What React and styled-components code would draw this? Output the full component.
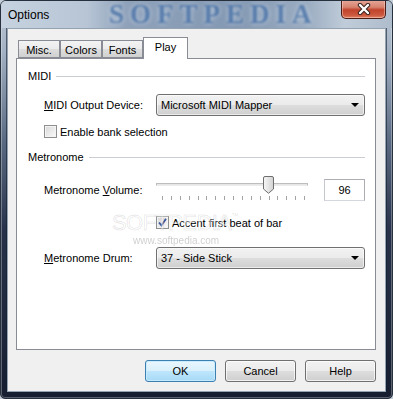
import React from 'react'
import styled, { createGlobalStyle } from 'styled-components'

const GlobalStyle = createGlobalStyle`
  html, body {
    margin: 0;
    padding: 0;
    background: #c3ced9;
  }
  body {
    font-family: "Liberation Sans", Arial, sans-serif;
  }
`

const Window = styled.div`
  position: relative;
  width: 393px;
  height: 399px;
  box-sizing: border-box;
  display: flex;
  flex-direction: column;
  overflow: hidden;
  border: 1px solid #27303d;
  border-radius: 6px 6px 5px 5px;
  background: linear-gradient(180deg, #bcc8d6 0px, #a3b2c4 50px, #5a6a82 140px, #27324a 230px, #161e30 399px);
  box-shadow: inset 0 0 0 1px rgba(255, 255, 255, 0.3);
`

const TitleBar = styled.div`
  position: relative;
  height: 27px;
  flex: none;
  display: flex;
  align-items: center;
  padding-left: 7px;
  background: linear-gradient(90deg, #c6d2df 0%, #b7c5d5 22%, #8fa2ba 32%, #8398b2 60%, #9aacc1 78%, #c0ccd9 88%, #aebccc 100%);
`

const Title = styled.span`
  position: relative;
  z-index: 1;
  font-size: 12px;
  color: #000;
`

const TitleMark = styled.span`
  position: absolute;
  left: 108px;
  top: -2px;
  font-family: "Liberation Serif", serif;
  font-weight: bold;
  font-size: 27px;
  letter-spacing: 6px;
  color: rgba(62, 104, 160, 0.75);
  text-shadow: 0 0 5px rgba(225, 235, 248, 0.7);
  filter: blur(0.8px);
`

const CloseButton = styled.div`
  position: absolute;
  top: -1px;
  right: 6px;
  width: 45px;
  height: 19px;
  box-sizing: border-box;
  display: flex;
  align-items: center;
  justify-content: center;
  border: 1px solid #4a1d16;
  border-top: none;
  border-radius: 0 0 5px 5px;
  background: linear-gradient(180deg, #e7a899 0%, #d7826f 40%, #c1432b 55%, #cc5a3e 85%, #e3866a 100%);
  box-shadow: inset 0 0 0 1px rgba(255, 220, 210, 0.45);
`

const Body = styled.div`
  flex: 1;
  display: flex;
  padding: 0 6px 6px 6px;
`

const Client = styled.div`
  flex: 1;
  display: flex;
  flex-direction: column;
  padding: 8px 9px 9px 8px;
  border: 1px solid #95a2b2;
  background: #f0f0f0;
  box-shadow: 0 0 0 1px rgba(20, 30, 45, 0.6);
`

const TabStrip = styled.div`
  display: flex;
  align-items: flex-end;
  height: 21px;
  padding-left: 2px;
`

const Tab = styled.div`
  position: relative;
  z-index: ${p => (p.$active ? 2 : 1)};
  width: ${p => p.$w}px;
  height: ${p => (p.$active ? 22 : 18)}px;
  margin-bottom: ${p => (p.$active ? -1 : 0)}px;
  box-sizing: border-box;
  display: flex;
  justify-content: center;
  align-items: ${p => (p.$active ? 'flex-start' : 'center')};
  padding-top: ${p => (p.$active ? 3 : 1)}px;
  border: 1px solid #898c95;
  border-bottom: ${p => (p.$active ? 'none' : '1px solid #898c95')};
  background: ${p => (p.$active ? '#fff' : 'linear-gradient(180deg, #f3f3f3 0%, #ebebeb 50%, #dedede 51%, #d0d0d0 100%)')};
  font-size: 11px;
  color: #000;
`

const Panel = styled.div`
  position: relative;
  height: 292px;
  box-sizing: border-box;
  display: flex;
  flex-direction: column;
  padding: 11px 10px 0 11px;
  border: 1px solid #898c95;
  background: #fff;
  font-size: 11px;
  color: #000;
`

const GroupHeader = styled.div`
  display: flex;
  align-items: center;
  gap: 5px;
  height: 13px;
  line-height: 13px;
  margin-top: ${p => p.$mt || 0}px;

  &::after {
    content: '';
    flex: 1;
    height: 1px;
    background: #c9cdd2;
  }
`

const Row = styled.div`
  display: flex;
  align-items: center;
  height: ${p => p.$h || 22}px;
  margin-top: ${p => p.$mt || 0}px;
  margin-left: ${p => p.$indent || 16}px;
`

const Label = styled.span`
  width: 112px;
  flex: none;
  white-space: nowrap;
`

const Select = styled.div`
  flex: 1;
  height: 22px;
  box-sizing: border-box;
  display: flex;
  align-items: center;
  justify-content: space-between;
  padding: 0 5px 1px 4px;
  border: 1px solid #707070;
  border-radius: 3px;
  background: linear-gradient(180deg, #f2f2f2 0%, #ebebeb 50%, #dddddd 51%, #cfcfcf 100%);
  box-shadow: inset 0 0 0 1px rgba(255, 255, 255, 0.6);
`

const Arrow = styled.span`
  width: 0;
  height: 0;
  border-left: 4px solid transparent;
  border-right: 4px solid transparent;
  border-top: 4px solid #000;
  margin-top: 1px;
`

const CheckLabel = styled.label`
  display: flex;
  align-items: center;
  gap: 3px;
  height: 13px;
`

const Box = styled.span`
  width: 13px;
  height: 13px;
  box-sizing: border-box;
  flex: none;
  display: flex;
  align-items: center;
  justify-content: center;
  border: 1px solid #8e8f8f;
  background: linear-gradient(135deg, #d6d6d6 0%, #e8e8e8 45%, #fafafa 100%);
  box-shadow: inset 0 0 0 1px #f4f4f4;
`

const Slider = styled.div`
  position: relative;
  width: 152px;
  height: 22px;
  flex: none;
  display: flex;
  flex-direction: column;
`

const Track = styled.div`
  height: 3px;
  margin-top: 4px;
  box-sizing: border-box;
  border: 1px solid #bdbdbd;
  border-bottom-color: #ececec;
  background: #e6e8e8;
`

const Ticks = styled.div`
  display: flex;
  justify-content: space-between;
  height: 4px;
  margin: 10px 3px 0 6px;
`

const Tick = styled.span`
  width: 1px;
  height: 4px;
  background: #a3a3a3;
`

const Thumb = styled.svg`
  position: absolute;
  left: 107px;
  top: -3px;
`

const Edit = styled.div`
  width: 41px;
  height: 22px;
  box-sizing: border-box;
  margin-left: auto;
  border: 1px solid #abadb3;
  border-left-color: #c5c8cf;
  border-bottom-color: #d4d7dd;
  background: #fff;
  text-align: center;
  line-height: 20px;
`

const Watermark = styled.span`
  position: absolute;
  left: 95px;
  top: 151px;
  font-size: 22px;
  letter-spacing: -0.6px;
  color: rgba(255, 255, 255, 0.5);
  -webkit-text-stroke: 1px rgba(0, 0, 0, 0.1);
  pointer-events: none;

  sup {
    font-size: 7px;
    vertical-align: 12px;
    -webkit-text-stroke: 0;
    color: rgba(0, 0, 0, 0.15);
  }
`

const WatermarkUrl = styled.span`
  position: absolute;
  left: 116px;
  top: 176px;
  font-size: 10px;
  color: rgba(0, 0, 0, 0.2);
  filter: blur(0.3px);
  pointer-events: none;
`

const ButtonRow = styled.div`
  display: flex;
  justify-content: flex-end;
  gap: 9px;
  margin-top: 10px;
`

const Button = styled.div`
  width: 71px;
  height: 22px;
  box-sizing: border-box;
  display: flex;
  align-items: center;
  justify-content: center;
  border: 1px solid ${p => (p.$primary ? '#3c7fb1' : '#707070')};
  border-radius: 3px;
  background: ${p =>
    p.$primary
      ? 'linear-gradient(180deg, #eaf6fd 0%, #d9f0fc 50%, #bee6fd 51%, #a7d9f5 100%)'
      : 'linear-gradient(180deg, #f2f2f2 0%, #ebebeb 50%, #dddddd 51%, #cfcfcf 100%)'};
  box-shadow: inset 0 0 0 1px ${p => (p.$primary ? 'rgba(200, 235, 255, 0.9)' : 'rgba(255, 255, 255, 0.7)')};
  font-size: 11px;
  color: #000;
`

const CheckBox = ({ checked }) => (
  <Box>
    {checked && (
      <svg width="9" height="9" viewBox="0 0 9 9">
        <path d="M1 4.5 L3.5 7.5 L8 0.8" fill="none" stroke="#3b5599" strokeWidth="1.8" />
      </svg>
    )}
  </Box>
)

const VOLUME = 96

const App = () => {
  const ticks = Array.from({ length: 17 })
  return (
    <>
      <GlobalStyle />
      <Window>
        <TitleBar>
          <TitleMark>SOFTPEDIA</TitleMark>
          <Title>Options</Title>
          <CloseButton>
            <svg width="14" height="12" viewBox="0 0 14 12">
              <path d="M3 2 L11 10 M11 2 L3 10" stroke="#3a2420" strokeWidth="4.4" strokeLinecap="round" />
              <path d="M3 2 L11 10 M11 2 L3 10" stroke="#fff" strokeWidth="2.4" strokeLinecap="round" />
            </svg>
          </CloseButton>
        </TitleBar>
        <Body>
          <Client>
            <TabStrip>
              <Tab $w={42}>Misc.</Tab>
              <Tab $w={42}>Colors</Tab>
              <Tab $w={41}>Fonts</Tab>
              <Tab $w={45} $active>Play</Tab>
            </TabStrip>
            <Panel>
              <GroupHeader>MIDI</GroupHeader>
              <Row $mt={11}>
                <Label><u>M</u>IDI Output Device:</Label>
                <Select>
                  <span>Microsoft MIDI Mapper</span>
                  <Arrow />
                </Select>
              </Row>
              <Row $mt={9} $h={13}>
                <CheckLabel>
                  <CheckBox />
                  Enable bank selection
                </CheckLabel>
              </Row>
              <GroupHeader $mt={13}>Metronome</GroupHeader>
              <Row $mt={15}>
                <Label>Metronome <u>V</u>olume:</Label>
                <Slider>
                  <Track />
                  <Ticks>
                    {ticks.map((_, i) => <Tick key={i} />)}
                  </Ticks>
                  <Thumb width="11" height="18" viewBox="0 0 11 18">
                    <defs>
                      <linearGradient id="thumb" x1="0" y1="0" x2="1" y2="0">
                        <stop offset="0" stopColor="#f7f7f7" />
                        <stop offset="1" stopColor="#d2d2d2" />
                      </linearGradient>
                    </defs>
                    <path d="M0.5 2 Q0.5 0.5 2 0.5 H9 Q10.5 0.5 10.5 2 V13 L5.5 17.3 L0.5 13 Z" fill="url(#thumb)" stroke="#6e6e6e" />
                  </Thumb>
                </Slider>
                <Edit>{VOLUME}</Edit>
              </Row>
              <Row $mt={15} $h={13} $indent={128}>
                <CheckLabel>
                  <CheckBox checked />
                  Accent first beat of bar
                </CheckLabel>
              </Row>
              <Row $mt={18}>
                <Label><u>M</u>etronome Drum:</Label>
                <Select>
                  <span>37 - Side Stick</span>
                  <Arrow />
                </Select>
              </Row>
              <Watermark>SOFTPEDIA<sup>™</sup></Watermark>
              <WatermarkUrl>www.softpedia.com</WatermarkUrl>
            </Panel>
            <ButtonRow>
              <Button $primary>OK</Button>
              <Button>Cancel</Button>
              <Button>Help</Button>
            </ButtonRow>
          </Client>
        </Body>
      </Window>
    </>
  )
}

export default App
